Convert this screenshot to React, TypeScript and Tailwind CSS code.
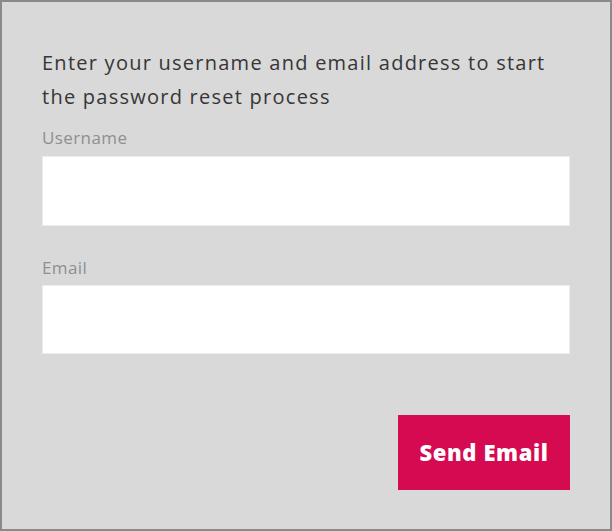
export default function App() {
  return (
    <div className="w-[612px] h-[531px] bg-white font-['Open_Sans',sans-serif]">
      <div className="w-full h-full bg-[#d9d9d9] border-2 border-[#8a8a8a] px-[40px] pt-[44px]">
        <p className="text-[20px] leading-[34px] text-[#363636] tracking-[1.25px]">
          Enter your username and email address to start the password reset process
        </p>

        <form className="mt-[12px] flex flex-col" onSubmit={(e) => e.preventDefault()}>
          <label className="flex flex-col">
            <span className="text-[17px] leading-[24px] text-[#8f8f8f] tracking-[0.4px]">Username</span>
            <input
              type="text"
              className="mt-[6px] h-[70px] w-full bg-white border border-[#ececec] outline-none px-3"
            />
          </label>

          <label className="mt-[30px] flex flex-col">
            <span className="text-[17px] leading-[24px] text-[#8f8f8f] tracking-[0.4px]">Email</span>
            <input
              type="email"
              className="mt-[5px] h-[69px] w-full bg-white border border-[#ececec] outline-none px-3"
            />
          </label>

          <div className="mt-[61px] flex justify-end">
            <button
              type="submit"
              className="w-[172px] h-[75px] bg-[#d50a50] text-white text-[22px] font-extrabold tracking-[0.6px]"
            >
              Send Email
            </button>
          </div>
        </form>
      </div>
    </div>
  );
}
